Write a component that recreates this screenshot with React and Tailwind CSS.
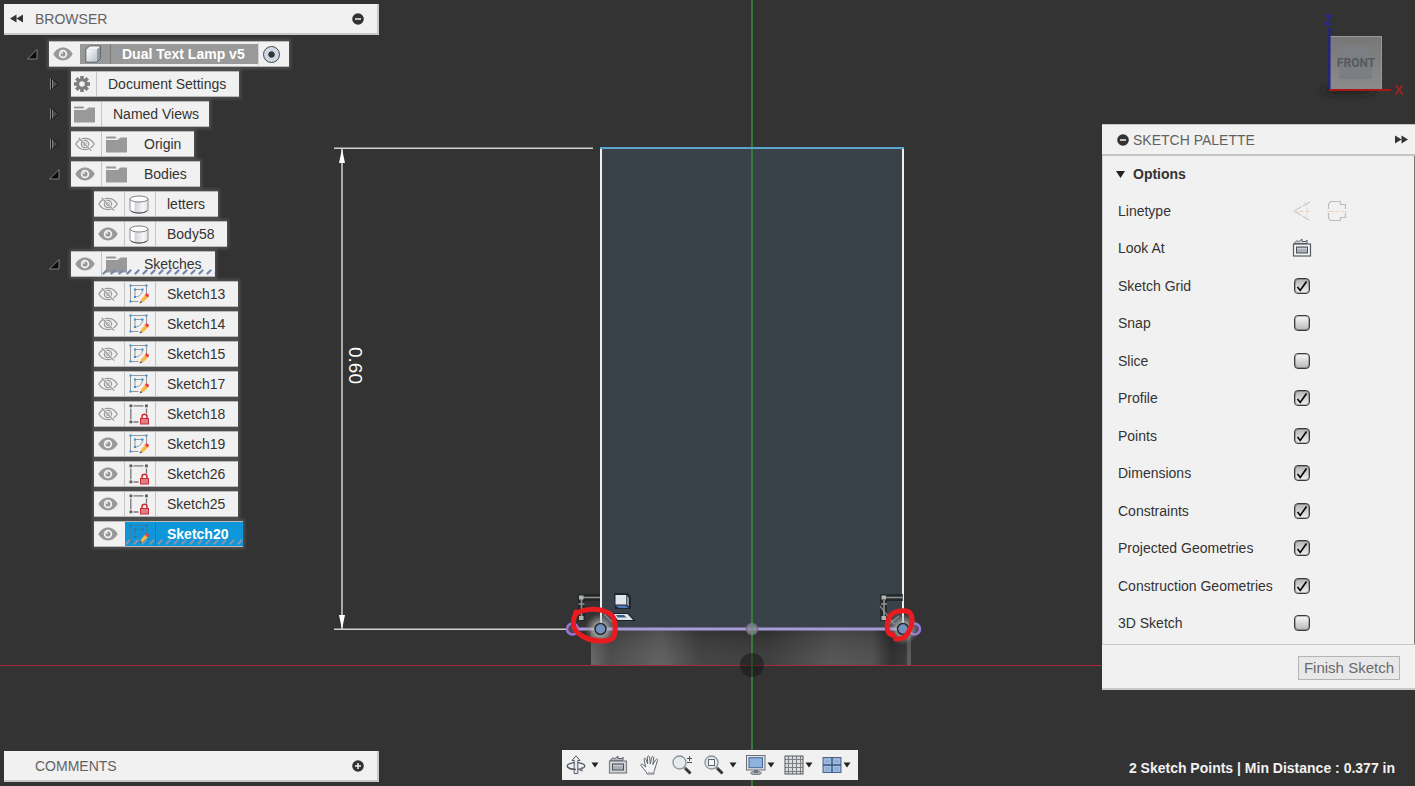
import React from "react";

const INDENT = ["pl-[23px]", "pl-[45px]", "pl-[68px]"];

const TREE = [
  { name: "Document Settings", level: 1, arrow: "closed", kind: "gear" },
  { name: "Named Views", level: 1, arrow: "closed", kind: "views" },
  { name: "Origin", level: 1, arrow: "closed", eye: "off", kind: "folder" },
  { name: "Bodies", level: 1, arrow: "open", eye: "on", kind: "folder" },
  { name: "letters", level: 2, eye: "off", kind: "body" },
  { name: "Body58", level: 2, eye: "on", kind: "body" },
  { name: "Sketches", level: 1, arrow: "open", eye: "on", kind: "folder", hatched: true },
  { name: "Sketch13", level: 2, eye: "off", kind: "sketch" },
  { name: "Sketch14", level: 2, eye: "off", kind: "sketch" },
  { name: "Sketch15", level: 2, eye: "off", kind: "sketch" },
  { name: "Sketch17", level: 2, eye: "off", kind: "sketch" },
  { name: "Sketch18", level: 2, eye: "off", kind: "locked" },
  { name: "Sketch19", level: 2, eye: "on", kind: "sketch" },
  { name: "Sketch26", level: 2, eye: "on", kind: "locked" },
  { name: "Sketch25", level: 2, eye: "on", kind: "locked" },
  { name: "Sketch20", level: 2, eye: "on", kind: "active", hatched: true, selected: true },
];

const OPTIONS = [
  ["Sketch Grid", true],
  ["Snap", false],
  ["Slice", false],
  ["Profile", true],
  ["Points", true],
  ["Dimensions", true],
  ["Constraints", true],
  ["Projected Geometries", true],
  ["Construction Geometries", true],
  ["3D Sketch", false],
];

function EyeOn() {
  return (
    <svg width="20" height="14" viewBox="0 0 20 14" aria-hidden="true">
      <path d="M0.3 7C2.600 3 6 .6 10 .6S17.400 3 19.700 7C17.400 11 14 13.400 10 13.400S2.600 11 .3 7z" fill="#999" />
      <circle cx="10" cy="7" r="3.400" fill="#999" stroke="#f4f4f4" strokeWidth="1.700" />
      <circle cx="8.900" cy="6" r=".9" fill="#f4f4f4" />
    </svg>
  );
}

function EyeOff() {
  return (
    <svg width="20" height="16" viewBox="0 0 20 16" fill="none" stroke="#9a9a9a" aria-hidden="true">
      <path d="M.8 8C3 4.300 6.200 2.400 10 2.400S17 4.300 19.200 8C17 11.700 13.800 13.600 10 13.600S3 11.700.8 8z" strokeWidth="1.300" />
      <circle cx="10" cy="8" r="3.600" strokeWidth="1.300" />
      <circle cx="10" cy="8" r="1.400" strokeWidth="1.200" />
      <path d="M4.600 2.400l12 12.200" stroke="#f1f1f1" strokeWidth="2.400" />
      <path d="M3.800 2l12.400 12.600" strokeWidth="1.300" />
    </svg>
  );
}

function Gear() {
  return (
    <svg width="18" height="18" viewBox="-9 -9 18 18" fill="#7d7d7d" aria-hidden="true">
      {[0, 45, 90, 135].map((a) => (
        <rect key={a} x="-1.800" y="-8" width="3.600" height="16" transform={`rotate(${a})`} />
      ))}
      <circle r="5.700" />
      <circle r="2.800" fill="#f1f1f1" />
    </svg>
  );
}

function Folder() {
  return (
    <svg width="21" height="17" viewBox="0 0 21 17" fill="#999" aria-hidden="true">
      <path d="M.5 .5h9l1 2H0V1z" />
      <path d="M0 4h11.500l3-2.500H21V16.500H0z" />
    </svg>
  );
}

function Cylinder() {
  return (
    <svg width="20" height="19" viewBox="0 0 20 19" aria-hidden="true">
      <defs>
        <linearGradient id="cyl" x1="0" x2="1">
          <stop offset="0" stopColor="#fff" />
          <stop offset=".22" stopColor="#fff" />
          <stop offset=".28" stopColor="#d3d5da" />
          <stop offset=".75" stopColor="#f6f6f8" />
          <stop offset="1" stopColor="#dcdee2" />
        </linearGradient>
      </defs>
      <path d="M1 4v10.500c0 2 4 3.500 9 3.500s9-1.500 9-3.500V4z" fill="url(#cyl)" stroke="#8a8d92" />
      <path d="M1.500 15.500c1.500 1.600 4.700 2.500 8.500 2.500s7-.9 8.500-2.500" fill="none" stroke="#4e5156" />
      <ellipse cx="10" cy="4" rx="9" ry="3" fill="#fff" stroke="#7d8085" />
    </svg>
  );
}

function Cube() {
  return (
    <svg width="17" height="18" viewBox="0 0 17 18" aria-hidden="true">
      <defs>
        <linearGradient id="cubeFace" x1="0" x2="1" y1="0" y2="1">
          <stop offset="0" stopColor="#fff" />
          <stop offset="1" stopColor="#b9bfc9" />
        </linearGradient>
      </defs>
      <path d="M1 4.500L4.500 1h11v12.500L12 17H1z" fill="#c2c8d1" stroke="#4c525a" />
      <path d="M1.500 4.500L4.800 1.500h10.200L12 4.500z" fill="#f3f4f6" />
      <path d="M12 4.500l3.300-3v11.700L12 16.500z" fill="#8f98a5" />
      <path d="M1.500 4.500H12v12H1.500z" fill="url(#cubeFace)" />
    </svg>
  );
}

function SketchIcon({ dim }) {
  const line = dim ? "#3a7fa8" : "#999";
  const dot = dim ? "#1c76b0" : "#2a95e0";
  return (
    <svg width="20" height="20" viewBox="0 0 20 20" aria-hidden="true">
      <path d="M1.500 1.500h16v9M1.500 1.500v16h8" fill="none" stroke={line} />
      <path d="M6 5.500h7.500c0 4-3 7.500-7.500 7.500z" fill="none" stroke={line} />
      {[[1.500, 1.500], [17.500, 1.500], [1.500, 17.500], [6, 5.500], [13.500, 5.500], [6, 13]].map(([x, y]) => (
        <rect key={`${x}-${y}`} x={x - 1} y={y - 1} width="2" height="2" fill={dot} />
      ))}
      <path d="M11.500 18.300l.7-3.100 4.100-4.700 2.800 2.700-4.300 4.500z" fill="#f9b744" />
      <path d="M15.900 10.800l1.500-1.700 2.500 1.600v1.500l-1.500 1.400z" fill="#ee3b46" />
      <path d="M10.500 19.500l1.100-2.500 1.900 1.500z" fill="#555" />
    </svg>
  );
}

function LockedSketchIcon() {
  return (
    <svg width="20" height="21" viewBox="0 0 20 21" aria-hidden="true">
      <path d="M4.500 1.800h10M1.800 4.500v11M4.500 18h5M17.500 4.500v5" fill="none" stroke="#777" strokeWidth="1.300" />
      <path d="M.5.500h2.800v2.800H.5zM16 .5h2.800v2.800H16zM.5 16.500h2.800v2.800H.5z" fill="#5a5a5a" />
      <path d="M13 15v-2.200a2.500 2.500 0 015 0V15" fill="none" stroke="#cb2c34" strokeWidth="1.500" />
      <rect x="11.500" y="14.500" width="8" height="5.500" fill="#dd8086" stroke="#cb2c34" />
    </svg>
  );
}

function KindIcon({ kind }) {
  if (kind === "gear") return <Gear />;
  if (kind === "folder" || kind === "views") return <Folder />;
  if (kind === "body") return <Cylinder />;
  if (kind === "locked") return <LockedSketchIcon />;
  return <SketchIcon dim={kind === "active"} />;
}

function Toggle({ state, label }) {
  return (
    <button type="button" aria-label={`Toggle ${label}`} className="flex w-[22px] shrink-0 items-center">
      {state === "open" ? (
        <svg width="11" height="11" viewBox="0 0 11 11" aria-hidden="true">
          <path d="M.5 10L10 .5V10z" fill="#0a0a0a" stroke="#808080" />
        </svg>
      ) : (
        <svg width="11" height="12" viewBox="0 0 11 12" aria-hidden="true">
          <path d="M3 1l6.500 5L3 11z" fill="#4a4a4a" stroke="#161616" />
          <path d="M1.500 .5v11M3.500 1.500v9" stroke="#858585" />
          <path d="M2.500 .5v11" stroke="#111" />
        </svg>
      )}
    </button>
  );
}

function Hatch({ light }) {
  return (
    <svg className="absolute bottom-px left-0 h-[6px] w-full" aria-hidden="true">
      <defs>
        <pattern id={light ? "hatchLight" : "hatch"} width="8" height="6" patternUnits="userSpaceOnUse">
          <path d="M1.500 4.500l3-3" stroke={light ? "#8196ae" : "#7589ae"} strokeWidth="2.400" strokeLinecap="round" />
        </pattern>
      </defs>
      <rect width="100%" height="6" fill={light ? "url(#hatchLight)" : "url(#hatch)"} />
    </svg>
  );
}

const PILL =
  "flex h-[26px] items-stretch border-y border-y-[#b8b8b8] bg-[#f1f1f1] shadow-[0_0_3px_2px_rgba(255,255,255,0.14)]";

function TreeRow({ item }) {
  const tinted = item.selected ? "bg-[#0d96d9] text-white font-bold" : "";
  const divided = item.kind !== "folder";
  const textEnd = item.selected ? "pr-[15px]" : item.kind === "views" ? "pr-[10px]" : "pr-[13px]";
  return (
    <li className={`flex ${INDENT[item.level]}`}>
      {item.arrow ? <Toggle state={item.arrow} label={item.name} /> : <span className="w-[22px]" />}
      <div className={PILL}>
        {item.eye && (
          <button
            type="button"
            aria-label={`Visibility of ${item.name}`}
            className={`flex w-[31px] items-center justify-center pr-[3px] ${item.selected ? "" : "border-r border-[#c4c4c4]"}`}
          >
            {item.eye === "on" ? <EyeOn /> : <EyeOff />}
          </button>
        )}
        <div className={`relative flex ${tinted}`}>
          <span
            className={`flex items-center justify-center ${item.kind === "gear" ? "w-[26px]" : "w-[31px]"} ${
              divided ? "border-r" : ""
            } ${item.selected ? "border-[#0a7fb9]" : "border-[#c4c4c4]"} pr-[3px]`}
          >
            <KindIcon kind={item.kind} />
          </span>
          <span className={`pl-[11px] leading-6 ${textEnd}`}>{item.name}</span>
          {item.hatched && <Hatch light={item.selected} />}
        </div>
      </div>
    </li>
  );
}

function CircleSign({ plus }) {
  return (
    <svg width="12" height="12" viewBox="0 0 12 12" aria-hidden="true">
      <circle cx="6" cy="6" r="5.800" fill="#333" />
      <path d={plus ? "M3 6h6M6 3v6" : "M3 6h6"} stroke="#f1f1f1" strokeWidth="1.500" />
    </svg>
  );
}

function DoubleArrow({ right }) {
  return (
    <svg width="13" height="9" viewBox="0 0 13 9" fill="#333" aria-hidden="true">
      {right ? <path d="M0 .5l6.500 4-6.500 4zM6.500 .5l6.500 4-6.500 4z" /> : <path d="M13 .5l-6.500 4 6.500 4zM6.500 .5L0 4.500l6.500 4z" />}
    </svg>
  );
}

function Browser() {
  return (
    <section className="w-[375px] pt-1">
      <header className="flex h-[31px] items-center border-b-2 border-r-2 border-[#c8c8c8] bg-[#f1f1f1] pl-[6px] pr-[13px]">
        <button type="button" aria-label="Collapse browser" className="w-[25px]"><DoubleArrow /></button>
        <h2 className="flex-1 text-[#626262]">BROWSER</h2>
        <button type="button" aria-label="Minimize browser"><CircleSign /></button>
      </header>
      <ul className="flex flex-col gap-1 pt-[6px]">
        <li className={`flex ${INDENT[0]}`}>
          <Toggle state="open" label="Dual Text Lamp v5" />
          <div className={PILL}>
            <button type="button" aria-label="Visibility of document" className="flex w-[31px] items-center justify-center pr-[3px]">
              <EyeOn />
            </button>
            <div className="my-[2px] flex items-stretch bg-[#999] font-bold text-white">
              <span className="flex w-[31px] items-center justify-center border-r border-[#7b7b7b] pr-[3px]"><Cube /></span>
              <label htmlFor="activate-root" className="pl-[11px] pr-[13px] leading-5">Dual Text Lamp v5</label>
            </div>
            <span className="flex w-[31px] items-center justify-center border-l border-[#d5d5d5] pr-1">
              <input
                id="activate-root"
                type="radio"
                defaultChecked
                className="size-[17px] appearance-none rounded-full border border-[#444] bg-radial from-[#333] from-25% to-[#cfd6e4] to-35%"
              />
            </span>
          </div>
        </li>
        {TREE.map((item) => <TreeRow key={item.name} item={item} />)}
      </ul>
    </section>
  );
}

function ViewCube() {
  return (
    <svg width="92" height="96" viewBox="1316 8 92 96" role="img" aria-label="View cube, front">
      <defs>
        <linearGradient id="face" x1="0" x2="0" y1="0" y2="1">
          <stop offset="0" stopColor="#777" />
          <stop offset="1" stopColor="#8b8b8b" />
        </linearGradient>
        <filter id="soft" x="-30%" y="-200%" width="160%" height="500%"><feGaussianBlur stdDeviation="3" /></filter>
      </defs>
      <ellipse cx="1348" cy="91" rx="27" ry="3" fill="#1c1c1c" filter="url(#soft)" />
      <rect x="1330" y="36" width="52" height="53" fill="url(#face)" />
      <path d="M1330 36.500h51.500V89" fill="none" stroke="#999" />
      <rect x="1339" y="46" width="33" height="33" fill="#7b7e82" />
      <text x="1356" y="67" textAnchor="middle" className="font-[Roboto,sans-serif] text-[12px] font-bold" fill="#565a5f">FRONT</text>
      <path d="M1329.500 28v61" stroke="#1d1dab" strokeWidth="2" />
      <path d="M1329 90h62" stroke="#a81818" strokeWidth="2" />
      <text x="1328.500" y="25" textAnchor="middle" className="font-['Open_Sans',sans-serif] text-[14px] font-semibold" fill="#2323a8">Z</text>
      <text x="1398.500" y="95" textAnchor="middle" className="font-['Open_Sans',sans-serif] text-[14px] font-semibold" fill="#a32020">X</text>
    </svg>
  );
}

function LookAtIcon({ muted }) {
  return (
    <svg width="20" height="20" viewBox="0 0 20 20" aria-hidden="true">
      <path d="M2 5.500l3-3 1.500 1.500 3.500-3v2.500h4l1-1.500v3.500z" fill={muted ? "#b9bcc0" : "#d8dade"} stroke="#5c6168" />
      <rect x="1.500" y="6" width="17" height="12" fill={muted ? "#d3d5d8" : "#f3f4f6"} stroke={muted ? "#7c8086" : "#555a61"} strokeWidth="1.200" />
      <rect x="4.500" y="9" width="11" height="6" fill="#a8afb9" stroke="#4c5157" />
      <path d="M5 10.500h10" stroke="#c9d0da" />
    </svg>
  );
}

function Linetype() {
  return (
    <div className="flex gap-[15px]">
      <button type="button" aria-label="Construction line">
        <svg width="20" height="20" viewBox="0 0 20 20" fill="none" aria-hidden="true">
          <path d="M18 1L2 10l16 9.500" stroke="#bdbdbd" strokeDasharray="8 1.500" />
          <path d="M0 10.500h20M12.500 1c3.500 5 3.500 13 0 18" stroke="#f2d2c0" strokeDasharray="5 1.500" />
        </svg>
      </button>
      <button type="button" aria-label="Centerline">
        <svg width="20" height="20" viewBox="0 0 20 20" fill="none" aria-hidden="true">
          <path d="M1.500 8V3.500l2-3h10v3h5V8M1.500 12v5l2 2.500h10v-3h5V12" stroke="#bdbdbd" strokeWidth="1.200" />
          <path d="M0 10.500h20" stroke="#f2d2c0" strokeDasharray="7 1.500 3 1.500" />
        </svg>
      </button>
    </div>
  );
}

function OptionRow({ name, checked }) {
  return (
    <label className="flex items-center">
      <span className="w-[174px]">{name}</span>
      <span className="relative flex w-5 items-center justify-center">
        <input
          type="checkbox"
          defaultChecked={checked}
          className="peer size-4 appearance-none rounded-[4px] border border-[#3c3c3c] bg-linear-to-b from-[#fafafa] to-[#b8b8b8] shadow-[inset_0_0_0_1px_rgba(0,0,0,0.25)] checked:from-[#b4b4b4] checked:to-[#f0f0f0]"
        />
        <svg className="pointer-events-none absolute hidden peer-checked:block" width="12" height="12" viewBox="0 0 12 12" aria-hidden="true">
          <path d="M1.500 7l2.700 3.500L10.500 1.500" fill="none" stroke="#000" strokeWidth="1.600" />
        </svg>
      </span>
    </label>
  );
}

function Palette() {
  return (
    <section className="w-[313px] bg-[#f1f1f1] text-[#333]">
      <header className="flex h-8 items-center border-b-2 border-t border-[#c4c4c4] pl-[15px] pr-[7px]">
        <button type="button" aria-label="Minimize palette" className="w-4"><CircleSign /></button>
        <h2 className="flex-1 text-[#626262]">SKETCH PALETTE</h2>
        <button type="button" aria-label="Dock palette"><DoubleArrow right /></button>
      </header>
      <div className="border-l border-r border-l-[#d0d0d0] border-r-[#777] pb-[2px] pl-[15px]">
        <button type="button" className="-ml-[2px] flex h-9 items-center gap-2 font-bold">
          <svg width="9" height="7" viewBox="0 0 9 7" aria-hidden="true"><path d="M0 0h9L4.500 7z" fill="#222" /></svg>
          Options
        </button>
        <div className="grid h-[450px] auto-rows-fr">
          <div className="flex items-center">
            <span className="w-[174px]">Linetype</span>
            <Linetype />
          </div>
          <div className="flex items-center">
            <span className="w-[174px]">Look At</span>
            <button type="button" aria-label="Look at"><LookAtIcon /></button>
          </div>
          {OPTIONS.map(([name, checked]) => <OptionRow key={name} name={name} checked={checked} />)}
        </div>
      </div>
      <footer className="flex h-[46px] items-end justify-end border-b-2 border-t border-[#c8c8c8] pb-2 pr-[15px]">
        <button type="button" className="h-6 border border-[#b4b4b4] bg-[#e8e8e8] px-[5px] text-[15px] leading-5 text-[#6a6a6a]">
          Finish Sketch
        </button>
      </footer>
    </section>
  );
}

function Canvas() {
  return (
    <svg
      className="absolute inset-0 h-full w-full"
      viewBox="0 0 1415 786"
      preserveAspectRatio="xMidYMid slice"
      role="img"
      aria-label="Front view of the sketch"
    >
      <defs>
        <linearGradient id="base" x1="0" x2="1">
          <stop offset="0" stopColor="#606060" />
          <stop offset=".06" stopColor="#444" />
          <stop offset=".22" stopColor="#595959" />
          <stop offset=".34" stopColor="#3a3a3a" />
          <stop offset=".55" stopColor="#343434" />
          <stop offset=".75" stopColor="#4d4d4d" />
          <stop offset=".88" stopColor="#484848" />
          <stop offset=".94" stopColor="#252525" />
          <stop offset=".985" stopColor="#2f2f2f" />
          <stop offset=".99" stopColor="#555" />
        </linearGradient>
        <radialGradient id="glow">
          <stop offset=".3" stopColor="#ccc" stopOpacity=".8" />
          <stop offset="1" stopColor="#888" stopOpacity="0" />
        </radialGradient>
        <linearGradient id="baseShade" x1="0" x2="0" y1="0" y2="1">
          <stop offset="0" stopColor="#000" stopOpacity=".12" />
          <stop offset="1" stopColor="#fff" stopOpacity=".06" />
        </linearGradient>
      </defs>
      <rect x="0" y="665" width="1415" height="1" fill="#a82a32" />
      <rect x="601" y="148" width="302" height="481" fill="#3a4249" />
      <rect x="591" y="629" width="320" height="36" fill="url(#base)" />
      <rect x="591" y="629" width="320" height="36" fill="url(#baseShade)" />
      <path d="M752 0v786" stroke="#388a3b" strokeWidth="1.600" />
      <circle cx="752" cy="665" r="12" fill="#111" fillOpacity=".5" />
      <path d="M740 665.500h24" stroke="#5c2428" />
      <path d="M752 653v24" stroke="#2c4a2d" strokeWidth="1.600" />
      <path d="M601 629V148M903 148v481" stroke="#eee" strokeWidth="2" />
      <path d="M600 148h304" stroke="#5aa5cb" strokeWidth="2" />

      <g stroke="#d2d2d2" strokeWidth="1.500">
        <path d="M334 148.200h259M334 629.200h238M342 148v481" />
      </g>
      <path d="M342 149l3 14h-6zM342 629l3-14h-6z" fill="#fff" />
      <text transform="translate(349 347) rotate(90)" className="font-['Liberation_Sans',Arial,sans-serif] text-[19px]" fill="#fff">0.60</text>

      <g>
        <path d="M578 594h22v7h-15v20h-7z" fill="#1f2326" fillOpacity=".8" />
        <path d="M583 597.500h17M581.500 599v18M578.500 604h6" stroke="#929292" strokeWidth="1.600" />
        <path d="M579 595.500h4.500v4H579zM579 616h4.500v4H579z" fill="#b3b3b3" />
        <path d="M880 594h23v7h-16v20h-7z" fill="#1f2326" fillOpacity=".8" />
        <path d="M885 597.500h18M884 600v17M881 604h6" stroke="#929292" strokeWidth="1.600" />
        <path d="M881.500 595.500h4.500v4h-4.500zM881.500 616h4.500v4h-4.500z" fill="#b3b3b3" />
        <path d="M880 606l14 18M889 624l10-8M604 614l12 12" stroke="#9a9a9a" strokeOpacity=".8" strokeWidth="1.300" />
      </g>
      <path d="M614 593h14l3 4v12h-16z" fill="#1c2530" />
      <path d="M615.500 595h10.500v9.500h-10.500z" fill="#e2e5e9" />
      <path d="M626.500 595l2.500 3v8.500l-2.500-2z" fill="#8d96a2" />
      <path d="M615.500 605.500h10.500l2.500 2.500h-10z" fill="#4a79b5" />
      <path d="M612 613.500h16l6.500 7h-17z" fill="#dfe2e6" stroke="#1a2028" strokeWidth="1.200" />
      <path d="M616 615h8l2.500 2.500h-9z" fill="#3b5f90" />

      <path d="M572 629h343" stroke="#a99bd9" strokeWidth="3" />
      <g fill="#4a4656" stroke="#9a78d8" strokeWidth="2.500">
        <circle cx="572.500" cy="629" r="5.500" />
        <circle cx="914.500" cy="629" r="5.500" />
      </g>
      <circle cx="752" cy="629" r="5.500" fill="#8f8a9e" fillOpacity=".8" stroke="#6f6b78" strokeWidth="1.500" />
      <path d="M752 622v14" stroke="#4e8e58" />
      <circle cx="600.500" cy="629" r="16" fill="url(#glow)" />
      <circle cx="903" cy="629" r="16" fill="url(#glow)" />
      <g fill="#7490bd" stroke="#26292e" strokeWidth="1.500">
        <circle cx="600.500" cy="629" r="5.500" />
        <circle cx="903" cy="629" r="5.500" />
      </g>
      <g fill="none" stroke="#ea1b1f" strokeWidth="5" strokeLinecap="round" strokeLinejoin="round">
        <path d="M575 615C580 609 596 608 604 611S614 616 615 625C616 638 613 641 602 641C590 641 577 636 574 627C572 620 575 616 576 612" />
        <path d="M893 635C885 634 887 623 889 618C892 610 905 610 909 612C914 616 912 626 909 631C906 638 902 639 896 639" />
      </g>
    </svg>
  );
}

function OrbitIcon() {
  return (
    <svg width="20" height="20" viewBox="0 0 20 20" aria-hidden="true">
      <ellipse cx="10" cy="11" rx="8.800" ry="3.400" fill="none" stroke="#555b63" strokeWidth="1.300" />
      <path d="M10 .7l4 4.800h-2.200v13H8.200v-13H6z" fill="#e9edf2" stroke="#555b63" />
      <path d="M12 14.800l4.500-3v5z" fill="#777d85" />
      <path d="M1.300 11c0 2 4 3.800 8.700 3.400" fill="none" stroke="#555b63" strokeWidth="1.300" />
    </svg>
  );
}

function HandIcon() {
  return (
    <svg width="20" height="20" viewBox="0 0 20 20" aria-hidden="true">
      <path
        d="M7 19c-.4-2.300-2-3.500-3.300-5.200L1 10.600c-.7-1 .7-2 1.700-1.200L5.700 12 4 4.600c-.3-1.500 1.600-2 2-.5L7.700 9 7.400 2.200c0-1.600 2-1.600 2.200 0L10.300 9l1.400-6.500c.4-1.500 2.200-1.100 2 .4L12.800 9.700l2.900-4.900c.8-1.300 2.300-.4 1.700.9-1.200 3-1.500 5.500-2.500 8.300-.6 1.800-1.200 2.800-1 5z"
        fill="#f4f5f7"
        stroke="#62666c"
      />
      <path d="M8 17.500h5" stroke="#b7bbc1" />
    </svg>
  );
}

function ZoomIcon({ fit }) {
  return (
    <svg width="20" height="20" viewBox="0 0 20 20" aria-hidden="true">
      <path d="M12.500 12.500l6 6" stroke="#33373c" strokeWidth="3" />
      <path d="M11.500 11.500l2 2" stroke="#969ba2" strokeWidth="2" />
      <circle cx="7.500" cy="7.500" r="6.500" fill="#e4ebec" stroke="#8c9298" strokeWidth="1.300" />
      {fit ? (
        <rect x="4.500" y="4.500" width="6" height="6" fill="#f5f7f8" stroke="#5f656c" />
      ) : (
        <path d="M15 3.500h5M17.500 1v5M15 7.500h5" stroke="#4c5056" />
      )}
    </svg>
  );
}

function MonitorIcon() {
  return (
    <svg width="20" height="20" viewBox="0 0 20 20" aria-hidden="true">
      <ellipse cx="10" cy="18" rx="5.500" ry="1.600" fill="#aab0b8" stroke="#676d75" strokeWidth=".8" />
      <path d="M8 14h4v4H8z" fill="#70767e" />
      <rect x=".5" y=".5" width="18.500" height="14.500" fill="#e2e5e9" stroke="#686e76" />
      <rect x="3" y="2.700" width="13.500" height="10" fill="#8eb2de" stroke="#45668f" />
    </svg>
  );
}

function GridIcon() {
  return (
    <svg width="20" height="20" viewBox="0 0 20 20" aria-hidden="true">
      <rect x="1" y="1" width="18" height="18" fill="#dcdddf" />
      <path d="M4.500 1v18M8.500 1v18M12.500 1v18M16.500 1v18M1 4.500h18M1 8.500h18M1 12.500h18M1 16.500h18" stroke="#7b7e82" />
      <rect x="1" y="1" width="18" height="18" fill="none" stroke="#575a5e" />
    </svg>
  );
}

function PanesIcon() {
  return (
    <svg width="20" height="18" viewBox="0 0 20 18" aria-hidden="true">
      <rect x="1" y="1.500" width="18" height="15" fill="#8eaed6" stroke="#4e6584" />
      <path d="M10 1.500v15M1 9h18" stroke="#3e587d" strokeWidth="1.400" />
      <path d="M2.500 3h6v4.500h-6zM11.500 3h6v4.500h-6zM2.500 10.500h6V15h-6zM11.500 10.500h6V15h-6z" fill="none" stroke="#a3bfe2" />
    </svg>
  );
}

function Tool({ label, className = "", children }) {
  return (
    <button type="button" aria-label={label} className={`flex w-5 items-center justify-center ${className}`}>
      {children}
    </button>
  );
}

function Caret({ label, className = "" }) {
  return (
    <button type="button" aria-label={label} className={`flex w-[10px] items-center justify-center ${className}`}>
      <svg width="8" height="6" viewBox="0 0 8 6" aria-hidden="true"><path d="M.5 .5h7L4 5.500z" fill="#222" /></svg>
    </button>
  );
}

function NavBar() {
  return (
    <nav aria-label="Navigation" className="mb-[2px] flex h-[30px] items-center bg-[#f1f1f1] pl-1 pr-[6px]">
      <Tool label="Orbit"><OrbitIcon /></Tool>
      <Caret label="Orbit menu" className="ml-1" />
      <Tool label="Look at" className="ml-2"><LookAtIcon muted /></Tool>
      <Tool label="Pan" className="ml-3"><HandIcon /></Tool>
      <Tool label="Zoom" className="ml-3"><ZoomIcon /></Tool>
      <Tool label="Fit" className="ml-3"><ZoomIcon fit /></Tool>
      <Caret label="Fit menu" className="ml-1" />
      <Tool label="Display settings" className="ml-2"><MonitorIcon /></Tool>
      <Caret label="Display menu" />
      <Tool label="Grid and snaps" className="ml-2"><GridIcon /></Tool>
      <Caret label="Grid menu" />
      <Tool label="Viewports" className="ml-2"><PanesIcon /></Tool>
      <Caret label="Viewports menu" />
    </nav>
  );
}

export default function App() {
  return (
    <main className="relative min-h-screen overflow-hidden bg-[#333] font-['Liberation_Sans',Arial,sans-serif] text-[14px] leading-5 text-[#333]">
      <Canvas />
      <div className="relative flex min-h-screen flex-col justify-between pl-1">
        <div className="flex items-start justify-between">
          <Browser />
          <aside className="flex flex-col items-end gap-5 pt-2">
            <div className="pr-[7px]"><ViewCube /></div>
            <Palette />
          </aside>
        </div>
        <div className="grid grid-cols-[1fr_auto_1fr] items-end pb-1">
          <section className="flex h-[31px] w-[375px] items-center border-b-2 border-r-2 border-[#c8c8c8] bg-[#f1f1f1] pl-[31px] pr-[13px]">
            <h2 className="flex-1 text-[#626262]">COMMENTS</h2>
            <button type="button" aria-label="Expand comments"><CircleSign plus /></button>
          </section>
          <NavBar />
          <p className="pb-1 pr-5 text-right font-bold text-[#f1f1f1]">2 Sketch Points | Min Distance : 0.377 in</p>
        </div>
      </div>
    </main>
  );
}
